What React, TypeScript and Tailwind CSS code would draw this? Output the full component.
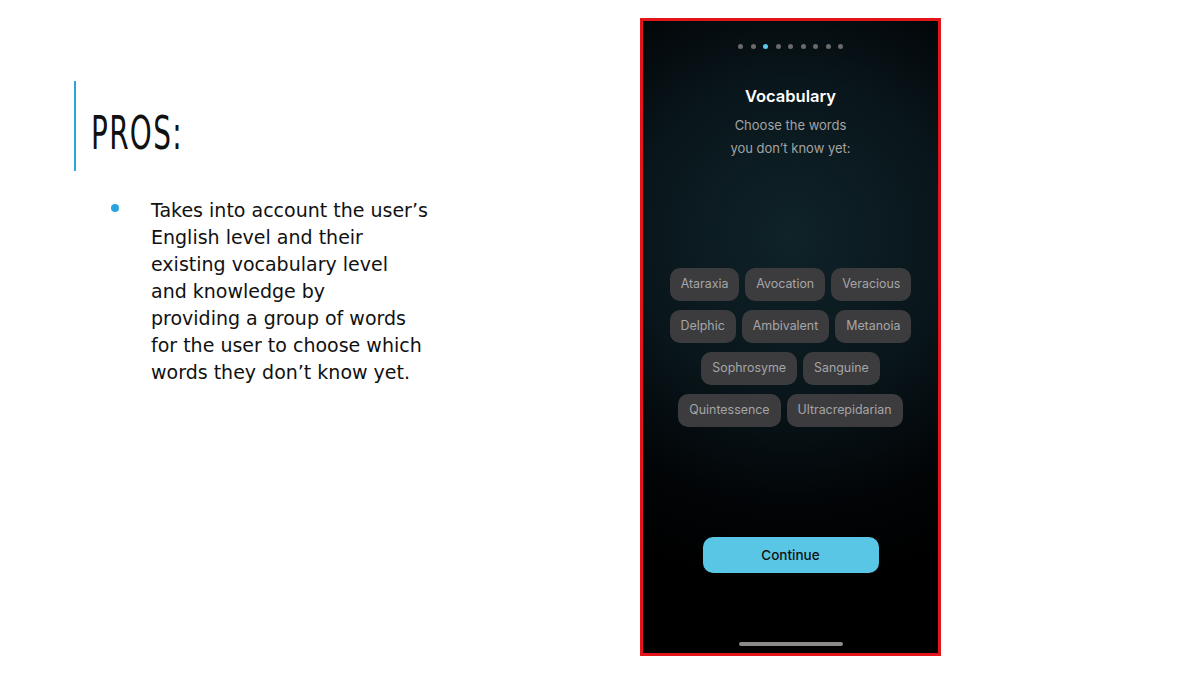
import React from "react";

const rows = [
  ["Ataraxia", "Avocation", "Veracious"],
  ["Delphic", "Ambivalent", "Metanoia"],
  ["Sophrosyme", "Sanguine"],
  ["Quintessence", "Ultracrepidarian"],
];

const lines = [
  "Takes into account the user’s",
  "English level and their",
  "existing vocabulary level",
  "and knowledge by",
  "providing a group of words",
  "for the user to choose which",
  "words they don’t know yet.",
];

export default function App() {
  return (
    <div className="w-[1200px] h-[675px] bg-white flex overflow-hidden">
      <div className="w-[640px] pl-[74px] pt-[81px]">
        <div className="h-[90px] border-l-2 border-[#2aa4dc] pl-[15px] pt-[27px]">
          <div
            className="text-[47px] leading-[50px] text-[#111] tracking-[2px]"
            style={{ fontFamily: '"DejaVu Sans Condensed", "Liberation Sans", sans-serif', fontWeight: 400, transform: "scaleX(0.66)", transformOrigin: "left" }}
          >
            PROS:
          </div>
        </div>
        <div className="flex mt-[26px] pl-[37px]">
          <div className="w-[8px] h-[8px] rounded-full bg-[#2aa4dc] mt-[7px]" />
          <div
            className="ml-[32px] text-[19px] leading-[27px] text-[#111]"
            style={{ fontFamily: '"DejaVu Sans", sans-serif' }}
          >
            {lines.map((l) => (
              <div key={l} className="whitespace-nowrap">{l}</div>
            ))}
          </div>
        </div>
      </div>
      <div className="pt-[18px]">
        <div className="w-[301px] h-[638px] border-[3px] border-[#e3151a]">
          <div
            className="w-full h-full flex flex-col items-center bg-[radial-gradient(circle_at_50%_34%,#0f2329_0%,#09161b_35%,#020406_62%,#000000_80%)]"
            style={{ fontFamily: 'Inter, "Noto Sans", sans-serif' }}
          >
            <div className="flex gap-[7.5px] mt-[23px]">
              {Array.from({ length: 9 }).map((_, i) => (
                <div
                  key={i}
                  className={i === 2 ? "w-[5px] h-[5px] rounded-full bg-[#5ac8e8]" : "w-[5px] h-[5px] rounded-full bg-[#6a6a6c]"}
                />
              ))}
            </div>
            <div className="mt-[36px] text-[16.5px] leading-[22px] font-semibold text-white">Vocabulary</div>
            <div className="mt-[7px] text-[13px] leading-[23px] text-[#a3a3a3] text-center">
              Choose the words
              <br />
              you don’t know yet:
            </div>
            <div className="mt-[108px] flex flex-col items-center gap-[9px]">
              {rows.map((r, i) => (
                <div key={i} className="flex gap-[6px]">
                  {r.map((w) => (
                    <div
                      key={w}
                      className="h-[33px] px-[11px] rounded-[10px] bg-[#3c3c3e] text-[12.4px] text-[#a5a5a7] flex items-center"
                    >
                      {w}
                    </div>
                  ))}
                </div>
              ))}
            </div>
            <div className="mt-[110px] w-[176px] h-[36px] rounded-[10px] bg-[#5ac6e5] flex items-center justify-center text-[13.5px] font-medium text-[#111]">
              Continue
            </div>
            <div className="mt-auto mb-[7px] w-[104px] h-[4px] rounded-full bg-[#8a8a8a]" />
          </div>
        </div>
      </div>
    </div>
  );
}
